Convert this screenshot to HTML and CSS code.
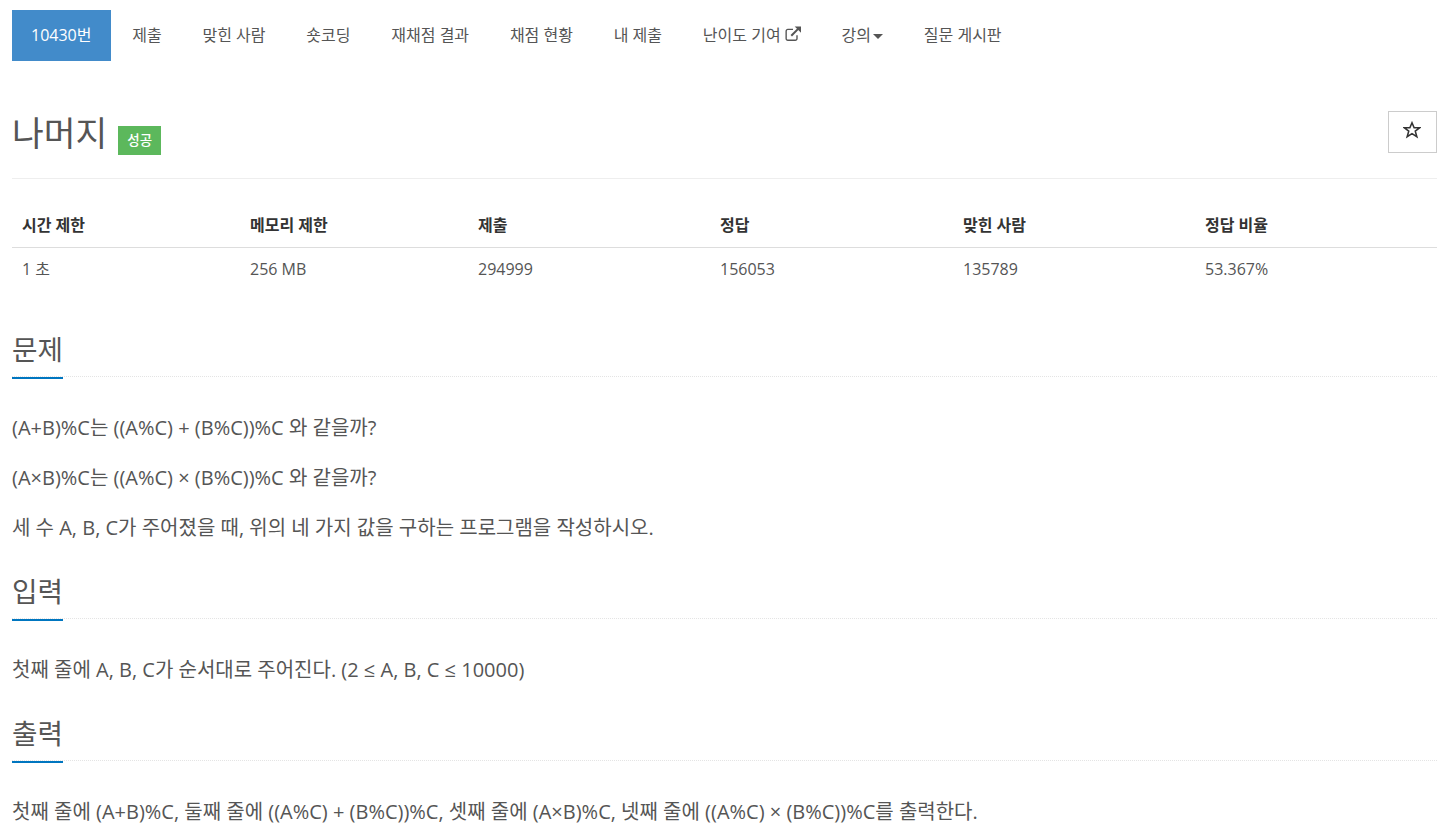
FILE: index.html
```html
<!DOCTYPE html>
<html lang="ko">
<head>
    <meta charset="UTF-8">
    <meta name="viewport" content="width=device-width, initial-scale=1.0">
    <title>10430번: 나머지</title>
    <link rel="stylesheet" href="styles.css">
</head>
<body>

    <ul class="nav">
        <li class="active"><a href="#">10430번</a></li>
        <li><a href="#">제출</a></li>
        <li><a href="#">맞힌 사람</a></li>
        <li><a href="#">숏코딩</a></li>
        <li><a href="#">재채점 결과</a></li>
        <li><a href="#">채점 현황</a></li>
        <li><a href="#">내 제출</a></li>
        <li><a href="#">난이도 기여
            <svg class="icon-link" viewBox="0 0 14 14" width="16" height="16"><path d="M10.5 8v3a1.5 1.5 0 0 1-1.5 1.5H2.5A1.5 1.5 0 0 1 1 11V4.5A1.5 1.5 0 0 1 2.5 3H7" fill="none" stroke="#555" stroke-width="1.2"/><path d="M5.5 8.5 11.5 2.5" fill="none" stroke="#555" stroke-width="1.8"/><path d="M8.5 0.5H14V6Z" fill="#555"/></svg></a></li>
        <li><a href="#">강의<span class="caret"></span></a></li>
        <li><a href="#">질문 게시판</a></li>
    </ul>

    <div class="page-header">
        <h1>나머지</h1>
        <span class="label">성공</span>
        <button class="star-btn">
            <svg viewBox="0 0 16 16" width="18" height="18"><path d="M8 1.6 9.9 6H14.8L10.9 9 12.3 14 8 11.2 3.7 14 5.1 9 1.2 6H6.1Z" fill="none" stroke="#333" stroke-width="1.4"/></svg>
        </button>
    </div>

    <table class="info">
        <colgroup>
            <col class="c1"><col class="c1"><col class="c2"><col class="c3"><col class="c2"><col>
        </colgroup>
        <thead>
            <tr>
                <th>시간 제한</th>
                <th>메모리 제한</th>
                <th>제출</th>
                <th>정답</th>
                <th>맞힌 사람</th>
                <th>정답 비율</th>
            </tr>
        </thead>
        <tbody>
            <tr>
                <td>1 초</td>
                <td>256 MB</td>
                <td>294999</td>
                <td>156053</td>
                <td>135789</td>
                <td>53.367%</td>
            </tr>
        </tbody>
    </table>

    <section class="problem first">
        <div class="headline"><h2>문제</h2></div>
        <p>(A+B)%C는 ((A%C) + (B%C))%C 와 같을까?</p>
        <p>(A×B)%C는 ((A%C) × (B%C))%C 와 같을까?</p>
        <p>세 수 A, B, C가 주어졌을 때, 위의 네 가지 값을 구하는 프로그램을 작성하시오.</p>
    </section>

    <section class="problem">
        <div class="headline"><h2>입력</h2></div>
        <p>첫째 줄에 A, B, C가 순서대로 주어진다. (2 ≤ A, B, C ≤ 10000)</p>
    </section>

    <section class="problem">
        <div class="headline"><h2>출력</h2></div>
        <p>첫째 줄에 (A+B)%C, 둘째 줄에 ((A%C) + (B%C))%C, 셋째 줄에 (A×B)%C, 넷째 줄에 ((A%C) × (B%C))%C를 출력한다.</p>
    </section>

</body>
</html>
```

FILE: styles.css
```css
* {
    box-sizing: border-box;
}

body {
    margin: 0;
    padding: 10px 11px 0 12px;
    background: #fff;
    color: #555;
    font-family: "Open Sans", "Noto Sans CJK KR", sans-serif;
    font-size: 16px;
    line-height: 20px;
}

a {
    color: inherit;
    text-decoration: none;
}

/* Top tabs */
.nav {
    display: flex;
    gap: 2.8px;
    margin: 0;
    padding: 0;
    list-style: none;
}

.nav a {
    display: block;
    height: 51px;
    padding: 15px 19px 0;
}

.nav .active {
    margin-right: -1px;
}

.nav .active a {
    padding-right: 20px;
    background: #428bca;
    color: #fff;
}

.icon-link {
    vertical-align: -1px;
}

.caret {
    display: inline-block;
    margin-left: 2px;
    vertical-align: middle;
    border-top: 5px solid #555;
    border-left: 5px solid transparent;
    border-right: 5px solid transparent;
}

/* Title */
.page-header {
    display: flex;
    align-items: flex-start;
    height: 68px;
    margin-top: 50px;
    border-bottom: 1px solid #eee;
}

h1 {
    margin: 0;
    font-size: 34.5px;
    font-weight: 400;
    line-height: 44px;
    color: #555;
}

.label {
    margin: 15px 0 0 11px;
    padding: 0 9px;
    height: 29px;
    background: #5cb85c;
    color: #fff;
    font-size: 13.5px;
    font-weight: 500;
    line-height: 29px;
}

.star-btn {
    margin-left: auto;
    width: 49px;
    height: 42px;
    padding: 0 2px 5px 0;
    background: #fff;
    border: 1px solid #ccc;
    display: flex;
    align-items: center;
    justify-content: center;
}

/* Limits table */
.info {
    width: 100%;
    margin-top: 25px;
    border-collapse: collapse;
    table-layout: fixed;
}

.c1 { width: 228px; }
.c2 { width: 242px; }
.c3 { width: 243px; }

.info th,
.info td {
    padding: 0 10px;
    text-align: left;
}

.info th {
    color: #333;
    font-weight: 700;
    height: 43px;
    padding-bottom: 1px;
    border-bottom: 1px solid #ddd;
}

.info td {
    height: 44px;
}

/* Problem sections */
.problem {
    margin-top: 27px;
}

.problem.first {
    margin-top: 37px;
}

.headline {
    height: 49px;
    margin-bottom: 16px;
    border-bottom: 1px dotted #e4e4e4;
}

.headline h2 {
    display: inline-block;
    height: 51px;
    margin: 0;
    border-bottom: 2px solid #0076c0;
    color: #555;
    font-size: 27.7px;
    font-weight: 400;
    line-height: 42px;
}

.problem p {
    margin: 0;
    padding-top: 20px;
    font-size: 20px;
    line-height: 30px;
}
```
